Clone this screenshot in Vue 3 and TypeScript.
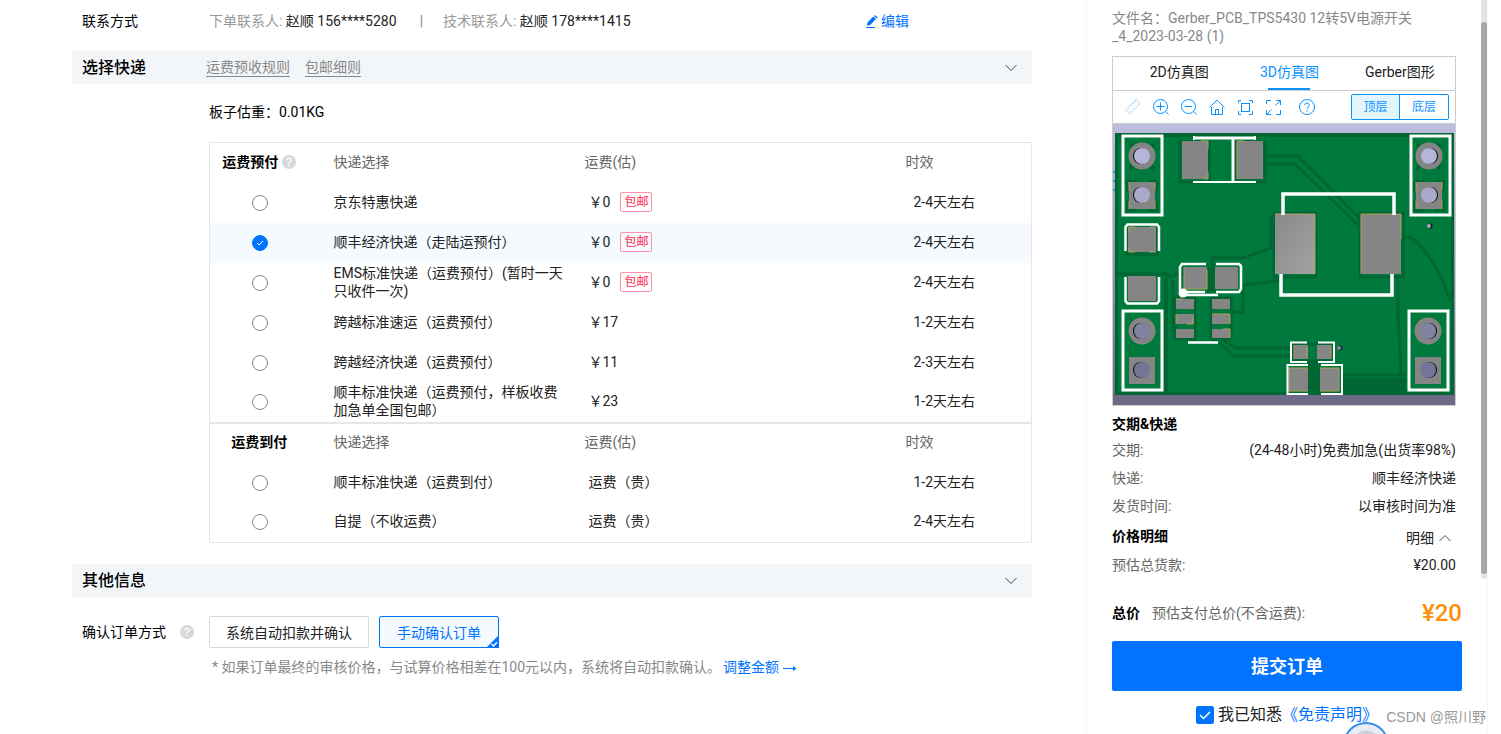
<script setup lang="ts">
import { ref } from 'vue'

interface Carrier { id: string; name: string; fee: string; free?: boolean; time: string }
interface Group { id: string; title: string; help: boolean; rows: Carrier[] }

const groups: Group[] = [
  {
    id: 'prepaid', title: '运费预付', help: true, rows: [
      { id: 'jd', name: '京东特惠快递', fee: '￥0', free: true, time: '2-4天左右' },
      { id: 'sf-eco', name: '顺丰经济快递（走陆运预付）', fee: '￥0', free: true, time: '2-4天左右' },
      { id: 'ems', name: 'EMS标准快递（运费预付）(暂时一天只收件一次)', fee: '￥0', free: true, time: '2-4天左右' },
      { id: 'ky-std', name: '跨越标准速运（运费预付）', fee: '￥17', time: '1-2天左右' },
      { id: 'ky-eco', name: '跨越经济快递（运费预付）', fee: '￥11', time: '2-3天左右' },
      { id: 'sf-std', name: '顺丰标准快递（运费预付，样板收费加急单全国包邮）', fee: '￥23', time: '1-2天左右' },
    ],
  },
  {
    id: 'collect', title: '运费到付', help: false, rows: [
      { id: 'sf-col', name: '顺丰标准快递（运费到付）', fee: '运费（贵）', time: '1-2天左右' },
      { id: 'self', name: '自提（不收运费）', fee: '运费（贵）', time: '2-4天左右' },
    ],
  },
]
const selected = ref('sf-eco')
const confirmMode = ref('manual')
const tabs = ['2D仿真图', '3D仿真图', 'Gerber图形']
const activeTab = ref(1)
const side = ref('top')
const agreed = ref(true)

const facts = [
  { k: '交期:', v: '(24-48小时)免费加急(出货率98%)' },
  { k: '快递:', v: '顺丰经济快递' },
  { k: '发货时间:', v: '以审核时间为准' },
]

const headers = [
  { x: 10, y: 12, cx: 29, top: true, dir: -1 },
  { x: 298, y: 12, cx: 316, top: true, dir: 1 },
  { x: 10, y: 187, cx: 29, top: false, dir: -1 },
  { x: 296, y: 187, cx: 315, top: false, dir: 1 },
]
const pads = [
  [69, 17, 26, 38], [124, 17, 26, 38], [15, 103, 28, 25], [15, 152, 28, 25],
  [71, 143, 23, 22], [102, 143, 23, 22],
  [63, 175, 18, 10], [63, 190, 18, 10], [63, 205, 18, 9],
  [99, 175, 18, 10], [99, 190, 18, 10], [99, 205, 18, 9],
  [181, 221, 14, 14], [204, 221, 14, 14], [176, 244, 19, 23], [207, 244, 19, 23],
]
</script>

<template>
  <div class="page">
    <main class="main">
      <div class="contact">
        <span class="label">联系方式</span>
        <span class="who"><i>下单联系人:</i> 赵顺 156****5280</span>
        <span class="bar">|</span>
        <span class="who tech"><i>技术联系人:</i> 赵顺 178****1415</span>
        <a href="#" class="edit">
          <svg width="12" height="13" viewBox="0 0 12 13"><path d="M.8 10.700l.8-3.400L7.300 1.600l2.600 2.500L4.200 9.900zM8 1l1-1 2.600 2.500-1 1z" fill="currentColor" /><path d="M0 12.500h9" stroke="currentColor" /></svg>
          编辑
        </a>
      </div>

      <section>
        <header class="section-bar">
          <h2>选择快递</h2>
          <a href="#" class="rule">运费预收规则</a>
          <a href="#" class="rule">包邮细则</a>
          <button class="fold" aria-label="收起选择快递"><svg width="12" height="8" viewBox="0 0 12 8"><path d="M.5 1L6 6.500 11.500 1" /></svg></button>
        </header>
        <p class="weight">板子估重：0.01KG</p>
        <table class="carriers">
          <colgroup><col class="c1"><col class="c2"><col class="c3"><col></colgroup>
          <tbody v-for="g in groups" :key="g.id">
            <tr>
              <th class="pick title" scope="col">
                <span class="title-in">{{ g.title }}<svg v-if="g.help" class="help" width="14" height="14" viewBox="0 0 14 14"><circle cx="7" cy="7" r="7" fill="#d8d8d8" /><path d="M4.900 5.400C4.900 4 5.800 3.300 7 3.300s2.100.700 2.100 1.800C9.100 6.500 7 6.600 7 8.300M7 9.600v1.400" fill="none" stroke="#fff" stroke-width="1.400" /></svg></span>
              </th>
              <th scope="col">快递选择</th><th scope="col">运费(估)</th><th scope="col">时效</th>
            </tr>
            <tr v-for="r in g.rows" :key="r.id" :class="{ on: selected === r.id }">
              <td class="pick"><input :id="r.id" v-model="selected" type="radio" name="carrier" :value="r.id"></td>
              <td><label :for="r.id" class="name">{{ r.name }}</label></td>
              <td class="inset"><span class="fee">{{ r.fee }}<span v-if="r.free" class="tag">包邮</span></span></td>
              <td class="inset">{{ r.time }}</td>
            </tr>
          </tbody>
        </table>
      </section>

      <section>
        <header class="section-bar second">
          <h2>其他信息</h2>
          <button class="fold" aria-label="收起其他信息"><svg width="12" height="8" viewBox="0 0 12 8"><path d="M.5 1L6 6.500 11.500 1" /></svg></button>
        </header>
        <div class="confirm">
          <span class="label">确认订单方式
            <svg class="help" width="14" height="14" viewBox="0 0 14 14"><circle cx="7" cy="7" r="7" fill="#d8d8d8" /><path d="M4.900 5.400C4.900 4 5.800 3.300 7 3.300s2.100.700 2.100 1.800C9.100 6.500 7 6.600 7 8.300M7 9.600v1.400" fill="none" stroke="#fff" stroke-width="1.400" /></svg>
          </span>
          <button class="choice" :class="{ chosen: confirmMode === 'auto' }" @click="confirmMode = 'auto'">系统自动扣款并确认</button>
          <button class="choice short" :class="{ chosen: confirmMode === 'manual' }" @click="confirmMode = 'manual'">手动确认订单
            <svg v-if="confirmMode === 'manual'" class="corner" width="13" height="13" viewBox="0 0 13 13"><path d="M13 0v13H0z" fill="#0073ff" /><path d="M5.500 9l2 2L11 7.200" fill="none" stroke="#fff" stroke-width="1.400" /></svg>
          </button>
        </div>
        <p class="hint">* 如果订单最终的审核价格，与试算价格相差在100元以内，系统将自动扣款确认。<a href="#">调整金额
          <svg width="14" height="8" viewBox="0 0 14 8"><path d="M0 4.500h12.500" fill="none" stroke="currentColor" /><path d="M10 2l3.500 2.500L10 7z" fill="currentColor" /></svg></a></p>
      </section>
    </main>

    <aside class="side">
      <div class="scroll">
        <div class="content">
          <p class="file">文件名：Gerber_PCB_TPS5430 12转5V电源开关<br>_4_2023-03-28 (1)</p>
          <div class="viewer">
            <div class="tabs" role="tablist">
              <button v-for="(t, i) in tabs" :key="t" role="tab" :aria-selected="i === activeTab" :class="{ active: i === activeTab }" @click="activeTab = i">{{ t }}</button>
            </div>
            <div class="tools">
              <button class="tool" aria-label="测量" disabled><svg viewBox="0 0 18 18"><path d="M1.500 12L12 1.500l4 4L5.500 16zM4 9.500l1.500 1.500M6.500 7l1.500 1.500M9 4.500l1.500 1.500M11 3l1 1M5.500 13.500h.5M8 11h.5M11 8h.5M13 6h.5" /></svg></button>
              <button class="tool" aria-label="放大"><svg viewBox="0 0 18 18"><circle cx="8.500" cy="8.500" r="7" /><path d="M4.500 8.500h8M8.500 4.500v8M13.500 13.500l3 3" /></svg></button>
              <button class="tool" aria-label="缩小"><svg viewBox="0 0 18 18"><circle cx="8.500" cy="8.500" r="7" /><path d="M5 8.500h7M13.500 13.500l3 3" /></svg></button>
              <button class="tool" aria-label="复位"><svg viewBox="0 0 18 18"><path d="M1.500 9.500L9 2l7.500 7.500M3.500 9v7.500h11V9M7.500 16.500v-5h3v5" /></svg></button>
              <button class="tool" aria-label="适应"><svg viewBox="0 0 18 18"><path d="M2.500 5V2.500H5M13 2.500h3.500V5M16.500 13v3.500H13M5 16.500H2.500V13" /><rect x="5.500" y="5.500" width="8" height="8" /></svg></button>
              <button class="tool" aria-label="全屏"><svg viewBox="0 0 18 18"><path d="M2.500 6V2.500H7M12 2.500h4.500V7M16.500 12v4.500H12M7 16.500H2.500V12M16.500 2.500L11.500 7.500M2.500 16.500L7.500 11.500" /></svg></button>
              <button class="tool help-tool" aria-label="帮助"><svg viewBox="0 0 18 18"><circle cx="9" cy="9" r="7.500" /><path d="M6.500 7.200C6.500 5.700 7.500 5 9 5s2.400.900 2.400 2.100C11.400 8.900 9 8.900 9 11M9 12v1.500" /></svg></button>
              <div class="layers">
                <button :class="{ active: side === 'top' }" @click="side = 'top'">顶层</button>
                <button :class="{ active: side === 'bottom' }" @click="side = 'bottom'">底层</button>
              </div>
            </div>
            <svg class="board" viewBox="0 0 342 281" role="img" aria-label="电路板">
              <defs>
                <linearGradient id="sky" x1="0" y1="0" x2="0" y2="1"><stop offset="0" stop-color="#bdbddd" /><stop offset="1" stop-color="#696985" /></linearGradient>
                <linearGradient id="metal" x1="0" y1="0" x2="1" y2="1"><stop offset="0" stop-color="#898989" /><stop offset="1" stop-color="#a2a2a2" /></linearGradient>
              </defs>
              <rect width="342" height="281" fill="url(#sky)" />
              <path d="M0 48h2M0 57h2M0 66h2" stroke="#159ddb" stroke-width="2" />
              <rect x="2" y="9" width="339" height="262" fill="#006732" />
              <path d="M5 13H338V268H55V154H5zM5 154H51V268H5z" fill="#00793c" />
              <g fill="none" stroke="#006732" stroke-width="3">
                <path d="M150 32H185L248 96M150 40H182L248 104M288 113h8q7 3 16 14 16 21 25 50" />
                <path d="M99 146V134h31l28-10V91M117 188h13v-27l38-5M4 150h50l4 3 5-3h9M60 156v54" />
                <path d="M107 214l16 10h54M107 219l14 13h56M285 151v40l3 60M230 251h63" />
                <path d="M67 18v40h29V18zM122 18v40h30V18zM14 102v28h30v-28M161 89h42v64h-42zM247 89h43v64h-43zM96 143v23h6v-23" />
                <path d="M62 174v41h20v-41zM98 174v41h20v-41zM180 220v17h39v-17z" />
              </g>
              <path d="M195 236h12v35h-12zM230 254h63v17h-63zM95 142h7v24h-7z" fill="#006732" />
              <g v-for="(h, i) in headers" :key="i">
                <rect :x="h.x" :y="h.y" width="39" height="79" fill="none" stroke="#fff" stroke-width="3" />
                <path v-if="h.top" :d="`M${h.cx - 12} ${h.y + 8}l24 25m0-25l-24 25M${h.cx - 14} ${h.y + 46}h9m10 0h9v9m0 10v9h-9m-10 0h-9v-9m0-10v-9`" fill="none" stroke="#006732" stroke-width="4" />
                <circle :cx="h.cx" :cy="h.y + 20" r="13.500" fill="#858585" />
                <rect :x="h.cx - 13" :y="h.y + 46" width="26" height="27" fill="#858585" />
                <circle :cx="h.cx + h.dir" :cy="h.y + 20" r="8" fill="#050509" />
                <circle :cx="h.cx" :cy="h.y + 20" r="8" :fill="h.top ? '#b4b5d8' : '#8283a3'" />
                <circle :cx="h.cx + h.dir" :cy="h.y + 59" r="8" fill="#050509" />
                <circle :cx="h.cx" :cy="h.y + 59" r="8" :fill="h.top ? '#a9aacb' : '#737496'" />
                <path v-if="h.top" :d="`M${h.cx - 13} ${h.y + 55}v-9M${h.cx + 13} ${h.y + 46}v8m0 11v8M${h.cx - 13} ${h.y + 65}v8`" stroke="#aba456" fill="none" />
              </g>
              <rect v-for="(p, i) in pads" :key="i" :x="p[0]" :y="p[1]" :width="p[2]" :height="p[3]" fill="#858585" />
              <path d="M88 17h7v8M95 48v7h-4M124 55V17h7M16 109v-6h6m15 0h6M16 124v4h6m14 0h7M71 143v22h23v-19M63 175h7M80 193v7h-6M63 190v10M99 190h18v10M110 205h7v9M181 221v14M218 221v14M194 223v11M176 267v-23h19M176 267h19M207 244h19v23h-19" fill="none" stroke="#aba456" />
              <rect x="162" y="90" width="40" height="60" fill="url(#metal)" /><rect x="248" y="90" width="40" height="60" fill="#858585" />
              <path d="M162 90h40v60M288 115V90h-40v60" fill="none" stroke="#aba456" />
              <g fill="none" stroke="#fff">
                <path d="M80 14H143M120 14V58" stroke-width="3" /><path d="M80 58H143M81 12v4M142 12v4" stroke-width="2" />
                <path d="M12.500 127V103l2-2.500H44l2 2.500v24M12.500 153v24l2 2.500H44l2-2.500v-24" stroke-width="2.500" />
                <path d="M93 140H69l-2 3v24M103 140h23l2 2v23l-2 3h-23M74 168h18" stroke-width="2.500" />
                <path d="M72 171h33M75 218.500h30" stroke-width="2.500" />
                <path d="M170 91V70H281V91M168 150v21H279V150" stroke-width="3.500" />
                <path d="M194 218.500H178V238H194M205 218.500H221V238H205M195 241H174.500V270H195M208 241H229V270H208" stroke-width="2" />
              </g>
              <circle cx="70" cy="169" r="4.500" fill="#fff" />
              <circle cx="317" cy="102" r="2.500" fill="#111" /><circle cx="316" cy="102" r="2" fill="#aaaacc" />
              <circle cx="227" cy="224" r="2.500" fill="#222" /><circle cx="226" cy="224" r="2" fill="#8384a5" />
            </svg>
          </div>
          <h3>交期&amp;快递</h3>
          <dl class="facts">
            <div v-for="f in facts" :key="f.k" class="fact"><dt>{{ f.k }}</dt><dd>{{ f.v }}</dd></div>
          </dl>
          <div class="price-head">
            <h3>价格明细</h3>
            <button class="detail">明细 <svg width="12" height="8" viewBox="0 0 12 8"><path d="M.5 7L6 1.500 11.500 7" /></svg></button>
          </div>
          <dl class="facts"><div class="fact"><dt>预估总货款:</dt><dd>¥20.00</dd></div></dl>
        </div>
        <div class="track"><div class="thumb"></div></div>
      </div>
      <div class="checkout">
        <div class="total"><b>总价</b><span>预估支付总价(不含运费):</span><strong>¥20</strong></div>
        <button class="submit">提交订单</button>
        <div class="agree">
          <input id="agree" v-model="agreed" type="checkbox"><label for="agree">我已知悉</label><a href="#">《免责声明》</a>
        </div>
      </div>
      <div class="bubble"></div>
      <span class="mark">CSDN @照川野</span>
    </aside>
  </div>
</template>

<style>
body { margin: 0; background: #fff; }
</style>

<style scoped>
* { box-sizing: border-box; }
.page { display: flex; height: 100vh; min-height: 734px; overflow: hidden; padding: 0 13px 0 72px; gap: 54px; font: 14px/20px Roboto, "Noto Sans CJK SC", sans-serif; color: #222; }
button { font: inherit; color: inherit; background: none; border: 0; padding: 0; cursor: pointer; }
a { color: #0073ff; text-decoration: none; }
h2, h3, p, dl, dd { margin: 0; }
i { font-style: normal; color: #999; }
.main { flex: 1; min-width: 0; }
.contact { display: flex; align-items: center; height: 42px; padding-left: 10px; }
.label { width: 127px; flex: none; color: #000; }
.bar { width: 43px; margin-left: 4px; text-align: center; color: #888; }
.who { width: 187px; white-space: nowrap; }
.tech { width: 423px; }
.edit { display: flex; align-items: center; gap: 3px; white-space: nowrap; }
.section-bar { display: flex; align-items: center; height: 33px; margin-top: 9px; padding: 0 15px 0 10px; background: #f3f6f9; }
.section-bar.second { margin-top: 21px; }
h2 { width: 124px; font-size: 16px; font-weight: 500; color: #000; }
.rule { margin-right: 15px; line-height: 18px; color: #888; border-bottom: 1px solid #888; }
.fold { display: flex; margin-left: auto; }
.fold path, .detail path { fill: none; stroke: #444; }
.weight { margin: 18px 0 20px 137px; color: #000; }
.carriers { width: calc(100% - 137px); margin-left: 137px; table-layout: fixed; border-collapse: collapse; border: 1px solid #e6e6e6; }
.carriers tbody + tbody { border-top: 2px solid #e6e6e6; }
.c1 { width: 101px; }
.c2 { width: 251px; }
.c3 { width: 321px; }
.carriers tr { height: 40px; }
.carriers .on { background: #f5faff; }
th, td { padding: 0 0 2px 23px; text-align: left; font-weight: 400; line-height: 18px; }
th { color: #666; }
th.title { font-weight: 700; color: #000; }
.pick { padding: 0; text-align: center; }
th.pick { padding: 0 2px 2px 0; }
.title-in { display: inline-flex; align-items: center; gap: 4px; }
td.inset { padding-left: 27px; }
td:last-child.inset { padding-left: 31px; }
.name { display: block; width: 232px; }
.fee { display: flex; align-items: center; }
.tag { margin-left: 10px; padding: 1px 3px 0; border: 1px solid #ff8fa8; border-radius: 2px; font-size: 12px; line-height: 17px; color: #ff1f4f; }
input { appearance: none; margin: 0; background: #fff center no-repeat; }
input[type="radio"] { display: block; width: 16px; height: 16px; margin: 0 auto; border: 1px solid #888; border-radius: 50%; }
input[type="radio"]:checked { border-color: #0073ff; background-color: #0073ff; background-image: url("data:image/svg+xml,%3Csvg xmlns='http://www.w3.org/2000/svg' width='8' height='6'%3E%3Cpath d='M1 3l2 2 4-4' fill='none' stroke='white'/%3E%3C/svg%3E"); }
.confirm { display: flex; align-items: center; margin-top: 19px; padding-left: 10px; }
.confirm .label { display: flex; align-items: center; gap: 14px; }
.choice { position: relative; width: 160px; height: 32px; padding-top: 2px; border: 1px solid #d9d9d9; border-radius: 2px; margin-right: 10px; white-space: nowrap; }
.choice.short { width: 120px; }
.choice.chosen { color: #0073ff; border-color: #0073ff; background: #f5faff; }
.corner { position: absolute; right: -1px; bottom: -1px; }
.hint { margin: 9px 0 0 140px; color: #888; }
.hint a { margin-left: 2px; }

.side { position: relative; flex: none; width: 402px; border: solid #f7f7f7; border-width: 0 1px; }
.scroll { display: flex; justify-content: space-between; height: 579px; padding-left: 25px; }
.content { width: 344px; padding-top: 9px; }
.track { width: 6px; padding-top: 22px; background: #e4e4e4; border-radius: 0 0 3px 3px; }
.thumb { height: 552px; background: #a8a8a8; border-radius: 3px; }
.file { line-height: 18px; color: #888; }
.viewer { margin-top: 11px; border: 1px solid #ccc; }
.tabs { display: flex; height: 34px; padding-left: 11px; border-bottom: 1px solid #ccc; }
.tabs button { position: relative; flex: 1; padding-bottom: 4px; white-space: nowrap; }
.tabs .active { color: #0a93ff; }
.tabs .active::after { content: ""; position: absolute; left: 50%; bottom: 0; width: 42px; height: 2px; margin-left: -21px; background: #0a93ff; }
.tools { display: flex; align-items: center; gap: 10px; height: 33px; padding: 0 6px 0 11px; border-bottom: 1px solid #ccc; }
.tool { display: flex; width: 18px; height: 18px; }
.tool:disabled { opacity: .35; }
.tool svg { width: 18px; height: 18px; fill: none; stroke: #0a93ff; }
.help-tool { margin-left: 6px; }
.layers { display: flex; margin-left: auto; border: 1px solid #0a93ff; border-radius: 2px; font-size: 12px; line-height: 24px; color: #0a93ff; }
.layers button { width: 48px; }
.layers .active { background: #e1f5ff; border-right: 1px solid #0a93ff; }
.board { display: block; width: 100%; }
h3 { margin-top: 8px; font-size: 14px; font-weight: 700; color: #000; }
.facts { padding-top: 2px; }
.fact { display: flex; justify-content: space-between; line-height: 28px; }
dt { color: #666; }
.price-head { display: flex; justify-content: space-between; }
.price-head h3 { margin-top: 6px; }
.detail { display: flex; align-items: center; gap: 5px; margin: 8px 5px 0 0; height: 20px; }
.price-head + .facts { margin-top: 1px; }
.checkout { padding: 19px 25px 0; }
.total { display: flex; align-items: center; height: 30px; color: #666; }
.total b { margin-right: 12px; color: #000; }
.total strong { margin-left: auto; font-size: 24px; font-weight: 500; color: #ff8f0c; }
.submit { display: block; width: 100%; height: 50px; margin-top: 13px; padding-top: 2px; border-radius: 2px; background: #0073ff; color: #fff; font-size: 18px; font-weight: 700; }
.agree { display: flex; align-items: center; justify-content: center; margin-top: 13px; line-height: 22px; font-size: 16px; }
.agree input { width: 18px; height: 18px; margin-right: 4px; border: 1px solid #0073ff; border-radius: 2px; }
.agree input:checked { background-color: #0073ff; background-image: url("data:image/svg+xml,%3Csvg xmlns='http://www.w3.org/2000/svg' width='12' height='10'%3E%3Cpath d='M1 5l3.500 3.500L11 2' fill='none' stroke='white' stroke-width='1.500'/%3E%3C/svg%3E"); }
.bubble { position: absolute; left: 256px; top: 722px; width: 46px; height: 46px; border: 2px solid #3b8eea; border-radius: 50%; background: radial-gradient(circle, #ccd0d8 0 14px, #e9edf3 15px); }
.mark { position: absolute; right: 1px; top: 707px; font-family: "Liberation Sans", "Noto Sans CJK SC", sans-serif; color: #999; white-space: nowrap; }
</style>
